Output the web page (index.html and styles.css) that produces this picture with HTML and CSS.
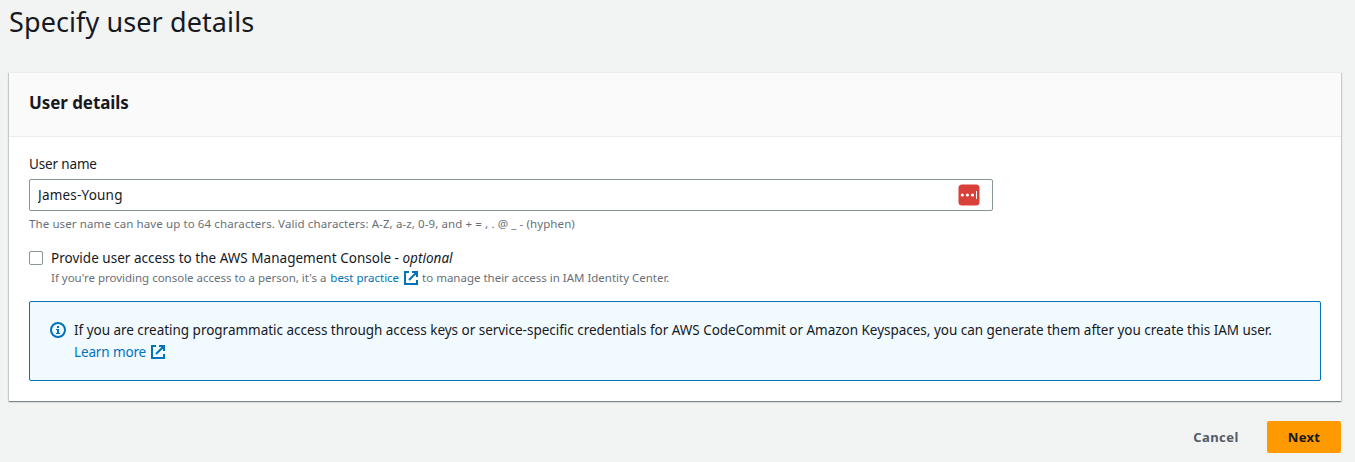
FILE: index.html
```html
<!DOCTYPE html>
<html lang="en">
<head>
<meta charset="utf-8">
<title>Specify user details</title>
<link rel="stylesheet" href="styles.css">
</head>
<body>
<main class="page">
  <h1 class="page-title">Specify user details</h1>
  <section class="card">
    <header class="card-header"><h2 class="card-title">User details</h2></header>
    <div class="card-body">
      <label class="field-label" for="username">User name</label>
      <div class="field">
        <input class="field-input" id="username" type="text" value="James-Young">
        <svg class="manager-icon" width="22" height="22" viewBox="0 0 22 22"><rect x=".5" y=".5" width="21" height="21" rx="3.5" fill="#d9403a"/><g fill="#fff"><circle cx="4.3" cy="11" r="1.6"/><circle cx="9.4" cy="11" r="1.6"/><circle cx="14.5" cy="11" r="1.6"/><rect x="18" y="7" width="1" height="8"/></g></svg>
      </div>
      <p class="hint hint-name">The user name can have up to 64 characters. Valid characters: A-Z, a-z, 0-9, and + = , . @ _ - (hyphen)</p>
      <div class="option">
        <input class="checkbox" id="console" type="checkbox">
        <div class="option-text">
          <label class="option-label" for="console">Provide user access to the AWS Management Console - <em>optional</em></label>
          <p class="hint hint-console"><span>If you're providing console access to a person, it's a</span><a class="link" href="#">best practice</a><svg class="external" viewBox="0 0 14 14"><path d="M5 1H1v12h12V9M8 1h5v5M13 1 5 9"/></svg><span>to manage their access in IAM Identity Center.</span></p>
        </div>
      </div>
      <div class="alert">
        <svg class="info" width="16" height="16" viewBox="0 0 16 16"><circle cx="8" cy="8" r="7" fill="none" stroke="#0073bb" stroke-width="2"/><path d="M7 4h2v2H7zM6 7h3v4h1v1H6v-1h1V8H6z" fill="#0073bb"/></svg>
        <div class="alert-content">
          <p class="alert-text">If you are creating programmatic access through access keys or service-specific credentials for AWS CodeCommit or Amazon Keyspaces, you can generate them after you create this IAM user.</p>
          <p class="alert-more"><a class="link" href="#">Learn more</a><svg class="external" viewBox="0 0 14 14"><path d="M5 1H1v12h12V9M8 1h5v5M13 1 5 9"/></svg></p>
        </div>
      </div>
    </div>
  </section>
  <footer class="actions">
    <button class="button button-cancel" type="button">Cancel</button>
    <button class="button button-next" type="button">Next</button>
  </footer>
</main>
</body>
</html>
```
FILE: styles.css
```css
* { box-sizing: border-box; }
body { margin: 0; height: 462px; overflow: hidden; background: #f2f3f3; color: #16191f; font: 13.5px/22px "Noto Sans", "Open Sans", sans-serif; }
h1, h2, p { margin: 0; }
.page { padding: 4px 14px 0 9px; }
.page-title { height: 68px; font-size: 27px; font-weight: 400; line-height: 36px; letter-spacing: .1px; white-space: nowrap; }
.card { height: 329px; background: #fff; border-top: 1px solid #eaeded; box-shadow: 0 1px 1px rgba(0,28,36,.3), 1px 1px 1px rgba(0,28,36,.15), -1px 1px 1px rgba(0,28,36,.15); }
.card-header { height: 64px; padding: 19px 20px; background: #fafafa; border-bottom: 1px solid #eaeded; }
.card-title { font-size: 17px; line-height: 22px; font-weight: 700; letter-spacing: -.08px; }
.card-body { padding: 16px 20px 0; display: flex; flex-direction: column; }
.field-label { width: max-content; letter-spacing: -.15px; }
.field { width: 964px; height: 32px; margin-top: 4px; padding-right: 12px; display: flex; align-items: center; border: 1px solid #879596; border-radius: 2px; background: #fff; }
.field-input { flex: 1; min-width: 0; height: 30px; padding: 0 8px; border: 0; outline: 0; background: transparent; color: #16191f; font: inherit; letter-spacing: .2px; }
.hint { font-size: 11.5px; line-height: 16px; color: #687078; white-space: nowrap; }
.hint-name { margin-top: 5px; width: max-content; letter-spacing: .105px; }
.option { display: flex; margin-top: 15px; gap: 8px; }
.checkbox { appearance: none; width: 14px; height: 14px; margin: 4px 0 0; border: 1px solid #879596; border-radius: 2px; background: #fff; }
.option-text { display: flex; flex-direction: column; }
.option-label { width: max-content; letter-spacing: .02px; }
.hint-console { display: flex; align-items: center; gap: 4px; padding-top: 1px; letter-spacing: -.01px; }
.hint-console .external { margin-left: 1px; }
.link { color: #0073bb; text-decoration: none; }
.external { width: 14px; height: 14px; flex: none; margin-top: -1px; fill: none; stroke: #0073bb; stroke-width: 2; }
.alert { height: 80px; margin-top: 15px; padding: 17px 20px; display: flex; gap: 8px; background: #f1faff; border: 1px solid #0073bb; border-radius: 2px; }
.info { margin-top: 3px; flex: none; }
.alert-text { letter-spacing: -.025px; white-space: nowrap; width: max-content; }
.alert-more { display: flex; align-items: center; gap: 5px; letter-spacing: -.13px; }
.actions { margin-top: 20px; display: flex; justify-content: flex-end; }
.button { height: 32px; padding: 0; border: 0; border-radius: 2px; font: 700 13px/22px "Noto Sans", "Open Sans", sans-serif; letter-spacing: .3px; }
.button-cancel { width: 102px; background: none; color: #545b64; letter-spacing: .4px; }
.button-next { width: 74px; background: #f90; color: #16191f; }
```
